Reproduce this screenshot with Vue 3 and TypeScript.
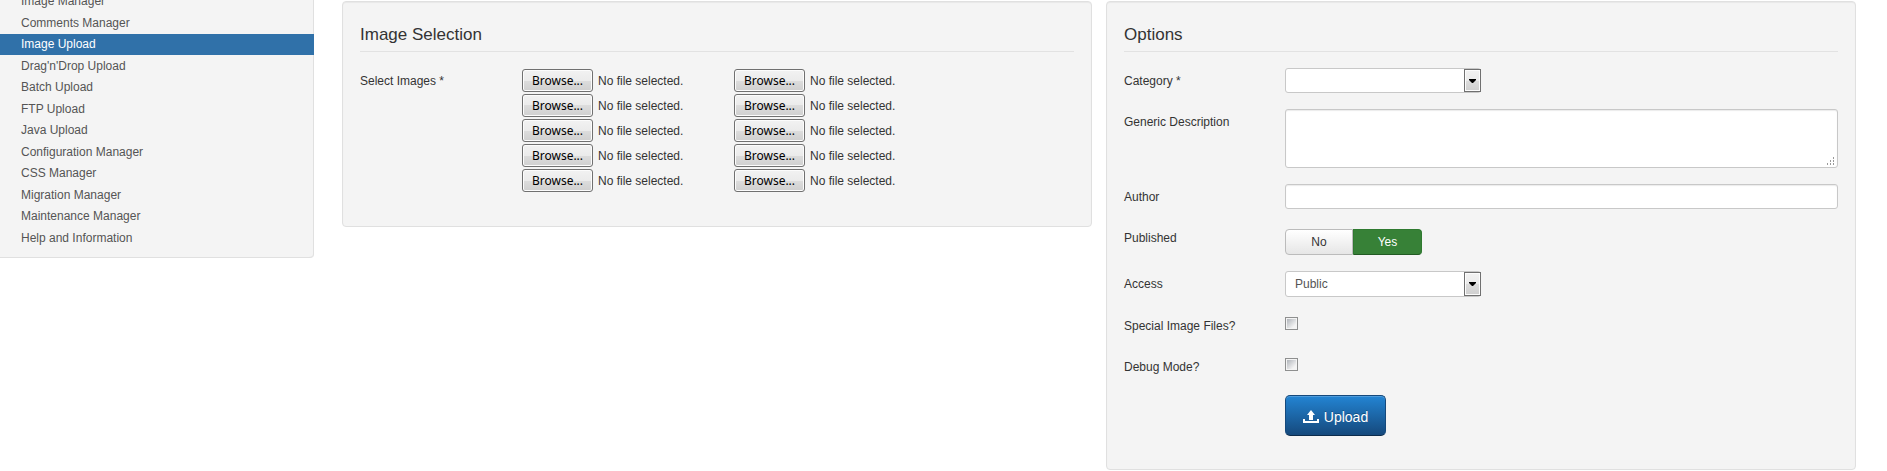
<script setup lang="ts">
import { ref } from 'vue'

const menu: string[] = [
  'Image Manager',
  'Comments Manager',
  'Image Upload',
  "Drag'n'Drop Upload",
  'Batch Upload',
  'FTP Upload',
  'Java Upload',
  'Configuration Manager',
  'CSS Manager',
  'Migration Manager',
  'Maintenance Manager',
  'Help and Information',
]
const current = ref('Image Upload')

const files = ref<string[]>(Array.from({ length: 10 }, () => 'No file selected.'))
function pick(index: number, event: Event) {
  const input = event.target as HTMLInputElement
  files.value[index] = input.files?.[0]?.name ?? 'No file selected.'
}

const category = ref('')
const description = ref('')
const author = ref('')
const published = ref('yes')
const access = ref('Public')
const special = ref(false)
const debug = ref(false)
</script>

<template>
  <div class="page">
    <nav class="sidebar">
      <ul>
        <li v-for="item in menu" :key="item">
          <a href="#" :class="{ active: item === current }" @click.prevent="current = item">{{ item }}</a>
        </li>
      </ul>
    </nav>

    <main class="content">
      <section class="well">
        <h2>Image Selection</h2>
        <div class="row">
          <span id="images-label" class="label">Select Images *</span>
          <div class="files" role="group" aria-labelledby="images-label">
            <label v-for="(name, i) in files" :key="i" class="file">
              <input type="file" accept="image/*" @change="pick(i, $event)" />
              <span class="browse">Browse...</span>
              <span>{{ name }}</span>
            </label>
          </div>
        </div>
      </section>

      <form class="well" @submit.prevent>
        <h2>Options</h2>
        <div class="row">
          <label class="label" for="category">Category *</label>
          <div class="select">
            <select id="category" v-model="category">
              <option value=""></option>
            </select>
            <span class="arrow"><svg width="7" height="4" viewBox="0 0 7 4"><path d="M0 0h7v1L4 4H3L0 1z" /></svg></span>
          </div>
        </div>
        <div class="row">
          <label class="label" for="description">Generic Description</label>
          <textarea id="description" v-model="description" class="field area"></textarea>
        </div>
        <div class="row">
          <label class="label" for="author">Author</label>
          <input id="author" v-model="author" class="field" type="text" />
        </div>
        <div class="row">
          <span id="published-label" class="label">Published</span>
          <div class="toggle" role="radiogroup" aria-labelledby="published-label">
            <label :class="{ on: published === 'no' }"><input v-model="published" type="radio" value="no" />No</label>
            <label :class="{ on: published === 'yes' }"><input v-model="published" type="radio" value="yes" />Yes</label>
          </div>
        </div>
        <div class="row">
          <label class="label" for="access">Access</label>
          <div class="select tall">
            <select id="access" v-model="access">
              <option>Public</option>
            </select>
            <span class="arrow"><svg width="7" height="4" viewBox="0 0 7 4"><path d="M0 0h7v1L4 4H3L0 1z" /></svg></span>
          </div>
        </div>
        <div class="row">
          <label class="label" for="special">Special Image Files?</label>
          <input id="special" v-model="special" class="check" type="checkbox" />
        </div>
        <div class="row">
          <label class="label" for="debug">Debug Mode?</label>
          <input id="debug" v-model="debug" class="check" type="checkbox" />
        </div>
        <div class="row">
          <span class="label"></span>
          <button class="upload" type="submit">
            <svg width="16" height="14" viewBox="0 0 16 14">
              <path d="M8 0l4 5H10v5H6V5H4zM0 9h2v2h12V9h2v4H0z" />
            </svg>
            Upload
          </button>
        </div>
      </form>
    </main>
  </div>
</template>

<style>
body {
  margin: 0;
  background: #fff;
}
</style>

<style scoped>
.page {
  display: flex;
  align-items: flex-start;
  overflow: hidden;
  font: 12px/18px "Liberation Sans", Arial, sans-serif;
  color: #333;
}
.page * {
  box-sizing: border-box;
}
/* The menu continues above the visible part of the page. */
.sidebar {
  flex: 0 0 314px;
  margin-top: -9px;
  padding-bottom: 8px;
  background: #f4f4f4;
  border-bottom: 1px solid #e0e0e0;
  border-radius: 0 0 4px 0;
  box-shadow: inset -1px 0 #e0e0e0;
}
.sidebar ul {
  margin: 0;
  padding: 0;
  list-style: none;
}
.sidebar li:nth-child(odd) {
  margin-bottom: 1px;
}
.sidebar a {
  display: block;
  padding: 0 21px;
  line-height: 21px;
  color: #555;
  text-decoration: none;
}
.sidebar a.active {
  background: #3071a9;
  color: #fff;
}
.content {
  flex: 1;
  display: grid;
  grid-template-columns: 1fr 1fr;
  align-items: start;
  gap: 14px;
  margin: 1px 31px 1px 28px;
}
.well {
  min-width: 0;
  padding: 17px;
  background: #f4f4f4;
  border: 1px solid #e0e0e0;
  border-radius: 4px;
  box-shadow: inset 0 1px 1px rgba(0, 0, 0, 0.05);
}
h2 {
  margin: 0 0 16px;
  border-bottom: 1px solid #e2e2e2;
  font-size: 17px;
  font-weight: 400;
  line-height: 32px;
}
.row {
  display: flex;
  align-items: flex-start;
  min-height: 25px;
  margin-bottom: 16px;
}
.label {
  flex: 0 0 161px;
  padding-top: 4px;
}
.files {
  display: grid;
  grid-template-columns: 212px 212px;
  padding-left: 1px;
}
.file {
  position: relative;
  display: flex;
  align-items: center;
  gap: 5px;
  height: 25px;
}
.file input {
  position: absolute;
  inset: 0;
  width: 100%;
  height: 100%;
  opacity: 0;
}
.browse {
  width: 71px;
  height: 23px;
  border: 1px solid #707070;
  border-radius: 3px;
  background: linear-gradient(#f2f2f2, #ebebeb 50%, #dddddd 50%, #cfcfcf);
  box-shadow: inset 0 0 0 1px #fcfcfc;
  color: #000;
  font: 12px/21px "Noto Sans", sans-serif;
  text-align: center;
}
.field {
  flex: 1;
  min-width: 0;
  height: 25px;
  padding: 3px 9px;
  border: 1px solid #c8c8c8;
  border-radius: 3px;
  background: #fff;
  box-shadow: inset 0 1px 1px rgba(0, 0, 0, 0.08);
  color: #555;
  font: inherit;
}
.area {
  height: 59px;
  resize: vertical;
}
.area::-webkit-resizer {
  background: url("data:image/svg+xml,%3Csvg xmlns='http://www.w3.org/2000/svg' width='15' height='15'%3E%3Cpath fill='%23999' d='M11 5h1v2h-1zM8 8h1v2h-1zM11 8h1v2h-1zM5 11h1v2h-1zM8 11h1v2h-1zM11 11h1v2h-1z'/%3E%3C/svg%3E") no-repeat;
}
.select {
  position: relative;
  width: 196px;
  height: 25px;
}
.select.tall {
  height: 26px;
}
.select select {
  width: 100%;
  height: 100%;
  padding: 0 26px 0 9px;
  border: 1px solid #c8c8c8;
  border-radius: 3px;
  background: #fff;
  appearance: none;
  color: #555;
  font: inherit;
}
.arrow {
  position: absolute;
  top: 1px;
  right: 0;
  bottom: 1px;
  display: flex;
  align-items: center;
  justify-content: center;
  width: 17px;
  border: 1px solid #707070;
  background: linear-gradient(#f2f2f2, #ebebeb 50%, #dddddd 50%, #cfcfcf);
  box-shadow: inset 0 0 0 1px #fcfcfc;
  pointer-events: none;
}
.toggle {
  display: flex;
  margin-top: 4px;
}
.toggle label {
  position: relative;
  width: 68px;
  height: 26px;
  border: 1px solid #bbb;
  border-radius: 4px 0 0 4px;
  background: linear-gradient(#fff, #e6e6e6);
  line-height: 24px;
  text-align: center;
}
.toggle label + label {
  width: 69px;
  border-radius: 0 4px 4px 0;
}
.toggle label.on {
  border-color: #2f7a30 #2f7a30 #225a23;
  background: #378137;
  color: #fff;
}
.toggle input {
  position: absolute;
  inset: 0;
  margin: 0;
  opacity: 0;
}
.check {
  width: 13px;
  height: 13px;
  margin: 4px 0 0;
  padding: 1px;
  border: 1px solid #8e8f8f;
  appearance: none;
  background: linear-gradient(135deg, #b0b4ba, #f4f4f4 80%) content-box, #f4f4f4;
}
.check:checked {
  background: #3071a9 content-box;
}
.upload {
  display: flex;
  align-items: center;
  justify-content: center;
  gap: 5px;
  width: 101px;
  height: 41px;
  padding: 2px 0 0;
  border: 1px solid #15497c;
  border-bottom-color: #0c2b4b;
  border-radius: 5px;
  background: linear-gradient(#2384d3, #15497c);
  box-shadow: inset 0 1px rgba(255, 255, 255, 0.2);
  color: #fff;
  font: 14px/20px "Liberation Sans", Arial, sans-serif;
  text-shadow: 0 -1px rgba(0, 0, 0, 0.25);
}
.upload svg {
  fill: #fff;
}
</style>
